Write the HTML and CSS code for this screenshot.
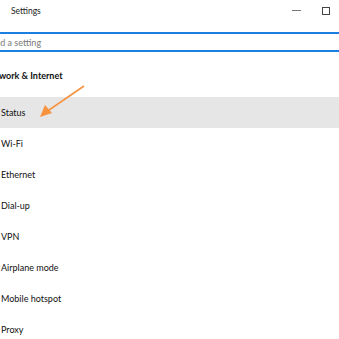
FILE: index.html
```html
<!DOCTYPE html>
<html lang="en">
<head>
    <meta charset="UTF-8">
    <meta name="viewport" content="width=device-width, initial-scale=1.0">
    <title>Settings</title>
    <link rel="stylesheet" href="styles.css">
</head>
<body>
    <div class="window">
        <div class="titlebar">
            <span class="title">Settings</span>
            <div class="controls">
                <span class="btn-min"></span>
                <span class="btn-max"></span>
            </div>
        </div>

        <div class="search">
            <input type="text" placeholder="Find a setting">
        </div>

        <h2 class="heading">Network &amp; Internet</h2>

        <ul class="nav">
            <li class="active">Status</li>
            <li>Wi-Fi</li>
            <li>Ethernet</li>
            <li>Dial-up</li>
            <li>VPN</li>
            <li>Airplane mode</li>
            <li>Mobile hotspot</li>
            <li>Proxy</li>
        </ul>

        <svg class="arrow" width="60" height="40" viewBox="0 0 60 40">
            <line x1="47" y1="4" x2="12" y2="28" stroke="#f7923f" stroke-width="1.6"/>
            <polygon points="3,35 8,23 15,31" fill="#f7923f"/>
        </svg>
    </div>
</body>
</html>
```

FILE: styles.css
```css
body {
    margin: 0;
    padding: 0;
    background-color: #fff;
    font-family: Lato, "Noto Sans", sans-serif;
    color: #111;
    overflow: hidden;
}

.window {
    position: relative;
    width: 339px;
    height: 339px;
    overflow: hidden;
}

.titlebar {
    height: 21px;
    display: flex;
    align-items: center;
    justify-content: space-between;
    padding-left: 11px;
}

.title {
    font-size: 8.5px;
    color: #222;
}

.controls {
    display: flex;
    align-items: center;
    gap: 21px;
    padding-right: 9px;
}

.btn-min {
    width: 9px;
    height: 1px;
    background-color: #777;
}

.btn-max {
    width: 6px;
    height: 6px;
    border: 1px solid #444;
}

.search {
    margin-top: 11px;
    margin-left: -30px;
    margin-right: -10px;
}

.search input {
    display: block;
    width: 100%;
    box-sizing: border-box;
    height: 20px;
    border: 2px solid #1a7fe0;
    padding: 1px 0 0 16px;
    font-family: inherit;
    font-size: 9px;
    outline: none;
}

.search input::placeholder {
    color: #7a7a7a;
}

.heading {
    margin: 17px 0 14px -16px;
    font-size: 9px;
    line-height: 14px;
    font-weight: bold;
}

.nav {
    list-style: none;
    margin: 0;
    padding: 0;
}

.nav li {
    height: 31px;
    line-height: 31px;
    padding-left: 1px;
    font-size: 9px;
}

.nav li.active {
    background-color: #e6e6e6;
}

.arrow {
    position: absolute;
    left: 37px;
    top: 82px;
}
```
